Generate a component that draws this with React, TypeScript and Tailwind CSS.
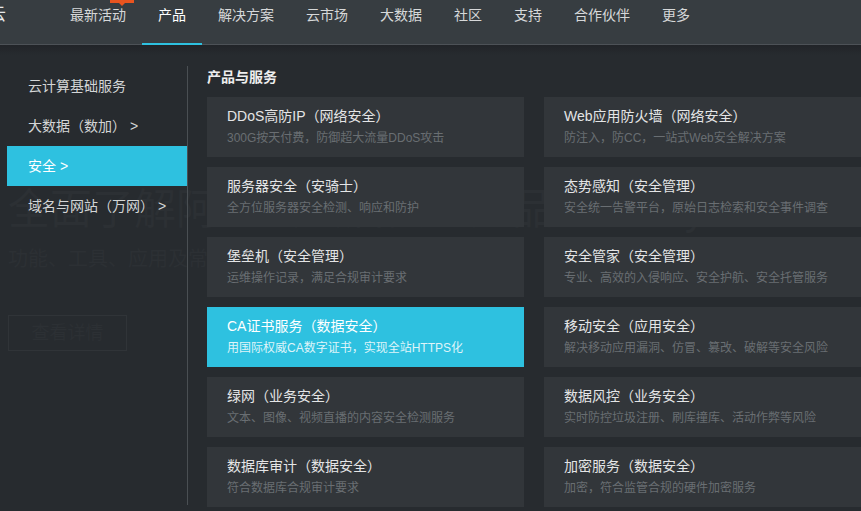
import React from "react";

const navItems = ["最新活动", "产品", "解决方案", "云市场", "大数据", "社区", "支持", "合作伙伴", "更多"];

const sideItems = [
  { label: "云计算基础服务", active: false },
  { label: "大数据（数加） >", active: false },
  { label: "安全 >", active: true },
  { label: "域名与网站（万网） >", active: false },
];

const cards: { title: string; desc: string; active?: boolean }[] = [
  { title: "DDoS高防IP（网络安全）", desc: "300G按天付费，防御超大流量DDoS攻击" },
  { title: "Web应用防火墙（网络安全）", desc: "防注入，防CC，一站式Web安全解决方案" },
  { title: "服务器安全（安骑士）", desc: "全方位服务器安全检测、响应和防护" },
  { title: "态势感知（安全管理）", desc: "安全统一告警平台，原始日志检索和安全事件调查" },
  { title: "堡垒机（安全管理）", desc: "运维操作记录，满足合规审计要求" },
  { title: "安全管家（安全管理）", desc: "专业、高效的入侵响应、安全护航、安全托管服务" },
  { title: "CA证书服务（数据安全）", desc: "用国际权威CA数字证书，实现全站HTTPS化", active: true },
  { title: "移动安全（应用安全）", desc: "解决移动应用漏洞、仿冒、篡改、破解等安全风险" },
  { title: "绿网（业务安全）", desc: "文本、图像、视频直播的内容安全检测服务" },
  { title: "数据风控（业务安全）", desc: "实时防控垃圾注册、刷库撞库、活动作弊等风险" },
  { title: "数据库审计（数据安全）", desc: "符合数据库合规审计要求" },
  { title: "加密服务（数据安全）", desc: "加密，符合监管合规的硬件加密服务" },
];

export default function App() {
  return (
    <div className="w-[861px] h-[511px] overflow-hidden bg-[#272b2f] font-['Liberation_Sans','Noto_Sans_CJK_SC',sans-serif]">
      <header className="h-[45px] bg-[#373d41] border-b border-[#4d5257] flex">
        <div className="w-[54px] overflow-hidden">
          <span className="block ml-[-11px] pt-[5px] text-[17px] leading-[20px] text-[#e8e9ea]">云</span>
        </div>
        {navItems.map((item, i) => (
          <div
            key={item}
            className={`relative px-4 pt-[5px] text-[14px] leading-[20px] ${i === 1 ? "text-white" : "text-[#d6d8d9]"}`}
          >
            {item}
            {i === 0 && (
              <div className="absolute left-[56px] top-[-11px] flex flex-col items-center">
                <span className="block w-[24px] h-[14px] bg-[#e9541f] text-[9px] leading-[14px] text-white text-center font-bold">NEW</span>
                <span className="block w-0 h-0 border-l-[3px] border-r-[3px] border-t-[3px] border-l-transparent border-r-transparent border-t-[#e9541f]"></span>
              </div>
            )}
            {i === 1 && <span className="absolute left-0 right-0 bottom-[-1px] h-[2px] bg-[#2ec1e0]"></span>}
          </div>
        ))}
      </header>

      <main className="relative h-[466px] bg-[linear-gradient(#212428_0px,#272b2f_10px)]">
        {/* faint banner underneath the dropdown */}
        <div className="pl-[8px] pt-[144px] text-[#2c3034] whitespace-nowrap">
          <div className="text-[42px] leading-[42px]">全面了解阿里云云盾安全产品Security</div>
          <div className="mt-[18px] text-[20px] leading-[20px]">功能、工具、应用及常见问题解答</div>
          <div className="mt-[46px] w-[119px] h-[36px] border border-[#303438] flex items-center justify-center text-[18px]">
            查看详情
          </div>
        </div>

        {/* dropdown menu */}
        <div className="absolute top-[21px] left-[7px] right-0 flex">
          <div className="w-[180px] flex flex-col">
            {sideItems.map((s) => (
              <div
                key={s.label}
                className={`h-[40px] pl-[21px] flex items-center text-[14px] ${s.active ? "bg-[#2ec1e0] text-white" : "text-[#d3d5d6]"}`}
              >
                {s.label}
              </div>
            ))}
          </div>
          <div className="w-px h-[439px] bg-[#4a4f53]"></div>
          <div className="pl-[19px]">
            <div className="h-[31px] leading-[22px] text-[14px] font-bold text-[#eeeeee]">产品与服务</div>
            <div className="grid grid-cols-[317px_317px] gap-x-[20px] gap-y-[10px]">
              {cards.map((c) => (
                <div key={c.title} className={`h-[60px] px-5 pt-[9px] ${c.active ? "bg-[#2ec1e0]" : "bg-[#32363a]"}`}>
                  <div className={`text-[14px] leading-[20px] whitespace-nowrap ${c.active ? "text-white" : "text-[#e4e5e6]"}`}>{c.title}</div>
                  <div className={`mt-[4px] text-[12px] leading-[16px] whitespace-nowrap ${c.active ? "text-[#def4f9]" : "text-[#696e72]"}`}>{c.desc}</div>
                </div>
              ))}
            </div>
          </div>
        </div>
      </main>
    </div>
  );
}
